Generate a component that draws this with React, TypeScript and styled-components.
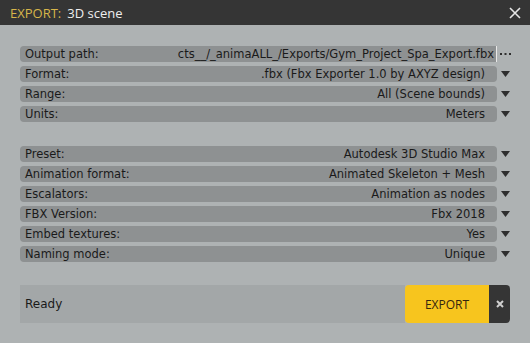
import React from 'react'
import styled, { createGlobalStyle } from 'styled-components'

const GlobalStyle = createGlobalStyle`
    html, body {
        margin: 0;
        padding: 0;
        background: #aeb2b3;
    }
`

const Window = styled.div`
    width: 530px;
    height: 343px;
    display: flex;
    flex-direction: column;
    background: #aeb2b3;
    font-family: "DejaVu Sans", Verdana, sans-serif;
    overflow: hidden;
`
const TitleBar = styled.div`
    height: 25px;
    flex: none;
    background: #353535;
    display: flex;
    align-items: center;
    justify-content: space-between;
    padding: 0 8px 0 10px;
    font-family: "Open Sans", sans-serif;
    font-size: 13px;
`
const TitleKey = styled.span`
    color: #d8b64a;
    margin-right: 6px;
`
const TitleName = styled.span`
    color: #eeeeee;
`
const CloseButton = styled.div`
    width: 14px;
    height: 14px;
    display: flex;
    align-items: center;
    justify-content: center;
`
const Body = styled.div`
    flex: 1;
    display: flex;
    flex-direction: column;
    padding: 21px 20px 20px 20px;
    gap: 24px;
`
const Group = styled.div`
    display: flex;
    flex-direction: column;
    gap: 4px;
`
const Row = styled.div`
    display: grid;
    grid-template-columns: 477px 1fr;
    align-items: center;
    height: 16px;
`
const Field = styled.div<{ $path?: boolean }>`
    height: 16px;
    background: #8e9192;
    border-radius: ${p => (p.$path ? '4px 0 0 4px' : '4px')};
    border-right: ${p => (p.$path ? '1px solid #e8e8e8' : 'none')};
    display: flex;
    align-items: center;
    font-size: 11.5px;
    color: #1a1a1a;
    overflow: hidden;
    white-space: nowrap;
`
const Label = styled.span`
    flex: none;
    padding-left: 5px;
`
const Value = styled.span<{ $path?: boolean }>`
    flex: 1;
    min-width: 0;
    display: flex;
    justify-content: flex-end;
    overflow: hidden;
    padding-right: ${p => (p.$path ? '2px' : '12px')};
    padding-left: 12px;
`
const Side = styled.div`
    display: flex;
    align-items: center;
    justify-content: center;
    padding-left: 3px;
    height: 16px;
`
const Status = styled.div`
    margin-top: -1px;
    height: 38px;
    display: flex;
    align-items: stretch;
`
const StatusText = styled.div`
    flex: 1;
    background: #a3a7a8;
    display: flex;
    align-items: center;
    padding-left: 5px;
    font-size: 12px;
    color: #1a1a1a;
`
const ExportButton = styled.div`
    width: 84px;
    background: #f7c51e;
    border-radius: 4px 0 0 4px;
    display: flex;
    align-items: center;
    justify-content: center;
    font-family: "Open Sans", sans-serif;
    font-size: 12px;
    color: #35260e;
`
const CancelButton = styled.div`
    width: 21px;
    background: #353535;
    border-radius: 0 4px 4px 0;
    display: flex;
    align-items: center;
    justify-content: center;
`

const Arrow = () => (
    <svg width="9" height="6" viewBox="0 0 9 6">
        <polygon points="0,0 9,0 4.5,6" fill="#2e2e2e" />
    </svg>
)

const Dots = () => (
    <svg width="11" height="3" viewBox="0 0 11 3">
        <rect x="0" y="0" width="2" height="2" fill="#2e2e2e" />
        <rect x="4.5" y="0" width="2" height="2" fill="#2e2e2e" />
        <rect x="9" y="0" width="2" height="2" fill="#2e2e2e" />
    </svg>
)

type Item = { label: string; value: string; path?: boolean }

const general: Item[] = [
    { label: 'Output path:', value: 'cts__/_animaALL_/Exports/Gym_Project_Spa_Export.fbx', path: true },
    { label: 'Format:', value: '.fbx (Fbx Exporter 1.0 by AXYZ design)' },
    { label: 'Range:', value: 'All (Scene bounds)' },
    { label: 'Units:', value: 'Meters' },
]

const fbx: Item[] = [
    { label: 'Preset:', value: 'Autodesk 3D Studio Max' },
    { label: 'Animation format:', value: 'Animated Skeleton + Mesh' },
    { label: 'Escalators:', value: 'Animation as nodes' },
    { label: 'FBX Version:', value: 'Fbx 2018' },
    { label: 'Embed textures:', value: 'Yes' },
    { label: 'Naming mode:', value: 'Unique' },
]

const OptionRow = ({ item }: { item: Item }) => (
    <Row>
        <Field $path={item.path}>
            <Label>{item.label}</Label>
            <Value $path={item.path}>{item.value}</Value>
        </Field>
        <Side>{item.path ? <Dots /> : <Arrow />}</Side>
    </Row>
)

export default function App() {
    return (
        <>
            <GlobalStyle />
            <Window>
                <TitleBar>
                    <div>
                        <TitleKey>EXPORT:</TitleKey>
                        <TitleName>3D scene</TitleName>
                    </div>
                    <CloseButton>
                        <svg width="12" height="12" viewBox="0 0 12 12">
                            <path d="M1 1 L11 11 M11 1 L1 11" stroke="#e6e6e6" strokeWidth="1.6" />
                        </svg>
                    </CloseButton>
                </TitleBar>
                <Body>
                    <Group>
                        {general.map(i => <OptionRow key={i.label} item={i} />)}
                    </Group>
                    <Group>
                        {fbx.map(i => <OptionRow key={i.label} item={i} />)}
                    </Group>
                    <Status>
                        <StatusText>Ready</StatusText>
                        <ExportButton>EXPORT</ExportButton>
                        <CancelButton>
                            <svg width="8" height="8" viewBox="0 0 8 8">
                                <path d="M1 1 L7 7 M7 1 L1 7" stroke="#d0d0d0" strokeWidth="2" />
                            </svg>
                        </CancelButton>
                    </Status>
                </Body>
            </Window>
        </>
    )
}
